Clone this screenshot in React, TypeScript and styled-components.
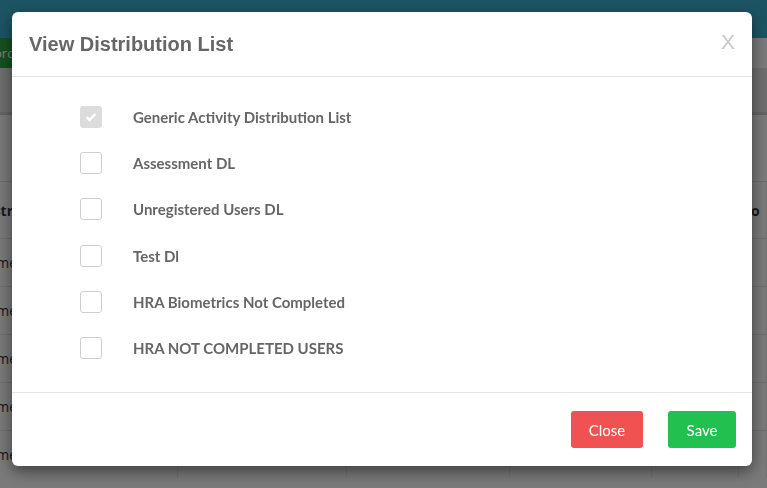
import React from 'react'
import styled, { createGlobalStyle } from 'styled-components'

const GlobalStyle = createGlobalStyle`
    html, body {
        margin: 0;
        padding: 0;
        width: 767px;
        height: 488px;
        overflow: hidden;
        font-family: "Liberation Sans", Arial, sans-serif;
    }
`

const Page = styled.div`
    width: 767px;
    height: 488px;
    background: #f4f4f4;
    display: flex;
    flex-direction: column;
`

const TopBar = styled.div`
    height: 38px;
    background: #3aa9c6;
    flex-shrink: 0;
`

const Toolbar = styled.div`
    height: 30px;
    display: flex;
    background: #f4f4f4;
`

const GreenBtn = styled.div`
    width: 90px;
    margin-left: -22px;
    background: #2ea043;
    color: #fff;
    font-size: 13px;
    line-height: 30px;
    font-family: "Open Sans", sans-serif;
`

const Band = styled.div`
    height: 44px;
    background: #dedede;
    border-bottom: 3px solid #c8c8c8;
`

const Spacer = styled.div`
    height: 66px;
`

const Table = styled.div`
    display: flex;
    flex-direction: column;
`

const Row = styled.div<{ $head?: boolean }>`
    display: grid;
    grid-template-columns: 178px 169px 163px 142px 87px 28px;
    height: ${p => (p.$head ? 56 : 47)}px;
    border-top: 1px solid #dcdcdc;
    font-family: "Open Sans", sans-serif;
    font-size: 14px;
    color: #333;
    font-weight: ${p => (p.$head ? 700 : 400)};
`

const Cell = styled.div<{ $shift?: number }>`
    border-right: 1px solid #e2e2e2;
    display: flex;
    align-items: center;
    overflow: hidden;
    white-space: nowrap;
    text-indent: ${p => p.$shift ?? 0}px;
`

const Overlay = styled.div`
    position: fixed;
    inset: 0;
    background: rgba(0, 0, 0, 0.5);
`

const Modal = styled.div`
    position: fixed;
    left: 12px;
    top: 12px;
    width: 740px;
    background: #fff;
    border-radius: 6px;
    box-shadow: 0 5px 15px rgba(0, 0, 0, 0.5);
    display: flex;
    flex-direction: column;
`

const Header = styled.div`
    height: 64px;
    border-bottom: 1px solid #e5e5e5;
    display: flex;
    align-items: center;
    justify-content: space-between;
    padding: 0 17px;
`

const Title = styled.h4`
    margin: 0;
    font-family: "Liberation Sans", Arial, sans-serif;
    font-weight: 700;
    font-size: 20px;
    color: #666;
`

const CloseX = styled.span`
    font-family: "Liberation Sans", Arial, sans-serif;
    font-size: 21px;
    color: #c8c8c8;
    margin-top: -4px;
`

const Body = styled.div`
    padding: 17px 0 24px 68px;
    height: 316px;
    box-sizing: border-box;
    border-bottom: 1px solid #e5e5e5;
`

const Item = styled.label`
    display: flex;
    align-items: center;
    height: 46.2px;
    gap: 31px;
    font-family: "Lato", sans-serif;
    font-weight: 700;
    font-size: 15px;
    color: #666;
`

const Box = styled.span<{ $checked?: boolean }>`
    width: 22px;
    height: 22px;
    box-sizing: border-box;
    border-radius: 3px;
    border: 1px solid ${p => (p.$checked ? '#dcdcdc' : '#cfcfcf')};
    background: ${p => (p.$checked ? '#dcdcdc' : '#fff')};
    display: flex;
    align-items: center;
    justify-content: center;
    flex-shrink: 0;
`

const Footer = styled.div`
    height: 73px;
    display: flex;
    align-items: center;
    justify-content: flex-end;
    gap: 25px;
    padding-right: 16px;
`

const Button = styled.button<{ $color: string; $width: number }>`
    height: 37px;
    width: ${p => p.$width}px;
    border: none;
    border-radius: 3px;
    background: ${p => p.$color};
    color: #fff;
    font-family: "Lato", sans-serif;
    font-size: 15px;
    padding: 0;
    cursor: pointer;
`

const items = [
    'Generic Activity Distribution List',
    'Assessment DL',
    'Unregistered Users DL',
    'Test Dl',
    'HRA Biometrics Not Completed',
    'HRA NOT COMPLETED USERS',
]

const rowText = ['Name', 'Name', 'Name', 'Name', 'Name']

export default function App() {
    return (
        <>
            <GlobalStyle />
            <Page>
                <TopBar />
                <Toolbar>
                    <GreenBtn>Coordi</GreenBtn>
                </Toolbar>
                <Band />
                <Spacer />
                <Table>
                    <Row $head>
                        <Cell $shift={-21}>Distri</Cell>
                        <Cell />
                        <Cell />
                        <Cell />
                        <Cell />
                        <Cell>e o</Cell>
                    </Row>
                    {rowText.map((t, i) => (
                        <Row key={i}>
                            <Cell $shift={-22}>{t}</Cell>
                            <Cell />
                            <Cell />
                            <Cell />
                            <Cell />
                            <Cell>1</Cell>
                        </Row>
                    ))}
                </Table>
            </Page>
            <Overlay />
            <Modal>
                <Header>
                    <Title>View Distribution List</Title>
                    <CloseX>X</CloseX>
                </Header>
                <Body>
                    {items.map((label, i) => (
                        <Item key={label}>
                            <Box $checked={i === 0}>
                                {i === 0 && (
                                    <svg width="12" height="10" viewBox="0 0 12 10">
                                        <path d="M1.5 5.2 L4.5 8 L10.5 1.8" fill="none" stroke="#fff" strokeWidth="2.4" />
                                    </svg>
                                )}
                            </Box>
                            {label}
                        </Item>
                    ))}
                </Body>
                <Footer>
                    <Button $color="#f05252" $width={72}>Close</Button>
                    <Button $color="#22c04e" $width={68}>Save</Button>
                </Footer>
            </Modal>
        </>
    )
}
